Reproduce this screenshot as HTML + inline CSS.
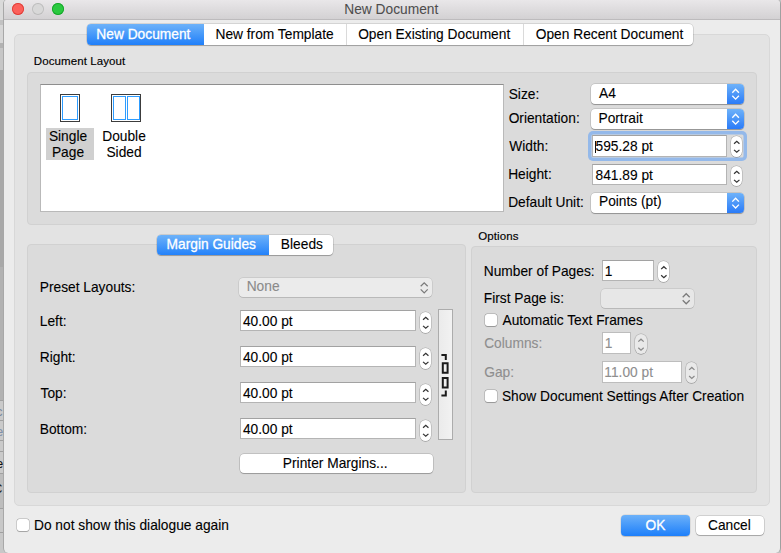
<!DOCTYPE html><html><head><meta charset="utf-8"><title>New Document</title><style>
*{margin:0;padding:0;box-sizing:border-box}
html,body{width:781px;height:553px;overflow:hidden;background:#c4c4c4;position:relative;font-family:"Liberation Sans",sans-serif}
.t{position:absolute;font-size:13.75px;letter-spacing:0px;line-height:16px;white-space:nowrap;-webkit-text-stroke:0.1px currentColor}
.ts{position:absolute;font-size:11.5px;letter-spacing:0.1px;line-height:14px;white-space:nowrap;-webkit-text-stroke:0.15px currentColor}
.popup{position:absolute;background:#fff;border-radius:4px;box-shadow:0 0 0 0.5px rgba(0,0,0,0.2),0 1px 0.8px rgba(0,0,0,0.25)}
.popup .arr{position:absolute;right:0;top:0;bottom:0;width:17px;border-radius:0 4px 4px 0;background:linear-gradient(#6eb2f9,#2a7bf8)}
.dpop{position:absolute;border-radius:4px;box-shadow:0 0 0 0.5px rgba(0,0,0,0.14),0 0.8px 0.6px rgba(0,0,0,0.12)}
.field{position:absolute;background:#fff;border:1px solid #b4b4b4;border-top-color:#a2a2a2}
.step{position:absolute;background:#fff;border-radius:6px;box-shadow:0 0 0 0.5px rgba(0,0,0,0.24),0 0.8px 0.6px rgba(0,0,0,0.16)}
.chk{position:absolute;width:12.2px;height:12.2px;background:#fff;border-radius:2.5px;box-shadow:0 0 0 0.5px rgba(0,0,0,0.26),0 0.6px 0.7px rgba(0,0,0,0.2)}
.btn{position:absolute;background:#fff;border-radius:4px;box-shadow:0 0 0 0.5px rgba(0,0,0,0.24),0 1px 0.8px rgba(0,0,0,0.2)}
</style></head><body>
<div style="position:absolute;left:0;top:0;width:4px;height:553px;background:linear-gradient(#dadada 0,#dadada 20px,#c2c2c2 20px,#c2c2c2 25px,#d6d6d6 25px,#d6d6d6 43px,#b2b2b2 43px,#b2b2b2 48px,#c6c6c6 48px,#c6c6c6 70px,#a9a9a9 70px,#a9a9a9 267px,#b2b2b2 267px,#b2b2b2 400px,#cacaca 400px,#cacaca 473px,#bdbdbd 473px,#bdbdbd 508px,#c8c8c8 508px)"></div>
<div style="position:absolute;left:0px;top:400px;width:3.5px;height:1px;background:#a0a0a0"></div>
<div style="position:absolute;left:0px;top:420px;width:3.5px;height:1px;background:#a0a0a0"></div>
<div style="position:absolute;left:0px;top:440px;width:3.5px;height:1px;background:#a0a0a0"></div>
<div style="position:absolute;left:0px;top:451px;width:3.5px;height:1px;background:#a0a0a0"></div>
<div style="position:absolute;left:0px;top:473px;width:3.5px;height:1px;background:#a0a0a0"></div>
<div style="position:absolute;left:0px;top:508px;width:3.5px;height:1px;background:#a0a0a0"></div>
<div style="position:absolute;left:0px;top:532px;width:3.5px;height:1px;background:#a0a0a0"></div>
<div style="position:absolute;left:0;top:0;width:3.5px;height:553px;overflow:hidden">
<div style="position:absolute;left:-4px;top:404px;font-size:13px;line-height:16px;color:#7a8aa0">c</div>
<div style="position:absolute;left:-4px;top:424px;font-size:13px;line-height:16px;color:#8090a8">e</div>
<div style="position:absolute;left:-4px;top:456px;font-size:13px;line-height:16px;color:#111">e</div>
<div style="position:absolute;left:-7px;top:481px;font-size:13px;line-height:16px;color:#222">C</div>
</div>
<div style="position:absolute;left:3px;top:0;width:778px;height:553px;background:#ececec;border-left:1px solid #a8a8a8;border-right:1px solid #a0a0a0;border-radius:4px 4px 5px 5px;overflow:hidden">
<div style="position:absolute;left:0;top:0;width:776px;height:20px;background:linear-gradient(#e9e7e9,#d3d1d3);border-bottom:1px solid #bdbbbd"></div>
</div>
<div style="position:absolute;left:12px;top:2.9000000000000004px;width:12px;height:12px;border-radius:50%;background:#fc605b;box-shadow:inset 0 0 0 0.9px #de3f39"></div>
<div style="position:absolute;left:32px;top:2.9000000000000004px;width:12px;height:12px;border-radius:50%;background:#d8d8d8;box-shadow:inset 0 0 0 0.9px #bdbdbd"></div>
<div style="position:absolute;left:52px;top:2.9000000000000004px;width:12px;height:12px;border-radius:50%;background:#2ac940;box-shadow:inset 0 0 0 0.9px #17a52b"></div>
<div class="t" style="left:241.3px;width:300px;text-align:center;top:2px;color:#4d4d4d;-webkit-text-stroke:0.05px #4d4d4d">New Document</div>
<div style="position:absolute;left:14px;top:34px;width:756px;height:471.5px;background:#e3e3e3;border:1px solid #d8d8d8;border-radius:5px"></div>
<div style="position:absolute;left:87px;top:24px;width:606px;height:20.5px;background:#fff;border-radius:4px;box-shadow:0 0 0 0.5px rgba(0,0,0,0.2),0 1px 0.8px rgba(0,0,0,0.22);overflow:hidden">
<div style="position:absolute;left:0;top:0;width:117px;height:21px;background:linear-gradient(#6db2f9,#1f7ffa)"></div>
<div style="position:absolute;left:259px;top:0;width:1px;height:21px;background:#dadada"></div>
<div style="position:absolute;left:436px;top:0;width:1px;height:21px;background:#dadada"></div>
</div>
<div class="t" style="left:96.37px;top:27px;color:#fff;-webkit-text-stroke:0.3px #fff">New Document</div>
<div class="t" style="left:215.47px;top:27px;color:#000;">New from Template</div>
<div class="t" style="left:358.15px;top:27px;color:#000;">Open Existing Document</div>
<div class="t" style="left:535.75px;top:27px;color:#000;">Open Recent Document</div>
<div class="ts" style="left:33.76px;top:54px;color:#000;">Document Layout</div>
<div style="position:absolute;left:27px;top:71.5px;width:730px;height:153.3px;background:#dbdbdb;border:1px solid #d1d1d1;border-radius:4px"></div>
<div style="position:absolute;left:40px;top:84px;width:464px;height:128px;background:#fff;border:1px solid #b9b9b9;border-top-color:#8e8e8e"></div>
<div style="position:absolute;left:60px;top:94px;width:20px;height:28px;border:1px solid #3c3c3c"></div>
<div style="position:absolute;left:62px;top:96px;width:16px;height:24px;border:1.5px solid #2d9cff"></div>
<div style="position:absolute;left:111px;top:94px;width:30px;height:28px;border:1px solid #3c3c3c"></div>
<div style="position:absolute;left:112.5px;top:96px;width:13px;height:24px;border:1.5px solid #2d9cff"></div>
<div style="position:absolute;left:126.5px;top:96px;width:13px;height:24px;border:1.5px solid #2d9cff"></div>
<div style="position:absolute;left:46px;top:128px;width:48px;height:32px;background:#d0d0d0"></div>
<div class="t" style="left:-82.0px;width:300px;text-align:center;top:129px;color:#000">Single</div>
<div class="t" style="left:-82.0px;width:300px;text-align:center;top:145px;color:#000">Page</div>
<div class="t" style="left:-26.0px;width:300px;text-align:center;top:129px;color:#000">Double</div>
<div class="t" style="left:-26.0px;width:300px;text-align:center;top:145px;color:#000">Sided</div>
<div class="t" style="left:508.68px;top:87px;color:#000;">Size:</div>
<div class="t" style="left:508.65px;top:111px;color:#000;">Orientation:</div>
<div class="t" style="left:509.24px;top:139px;color:#000;">Width:</div>
<div class="t" style="left:508.17px;top:167px;color:#000;">Height:</div>
<div class="t" style="left:508.17px;top:195px;color:#000;">Default Unit:</div>
<div class="popup" style="left:590.5px;top:84.3px;width:153.3px;height:20.2px"><div class="arr"><svg width="17" height="20.2" style="position:absolute;left:0;top:0"><path d="M5.3 8.70 L8.6 5.30 L11.9 8.70 M5.3 11.70 L8.6 15.10 L11.9 11.70" stroke="#fff" stroke-width="1.35" fill="none"/></svg></div></div>
<div class="t" style="left:599.07px;top:86px;color:#000;">A4</div>
<div class="popup" style="left:590.5px;top:109.3px;width:153.3px;height:20.2px"><div class="arr"><svg width="17" height="20.2" style="position:absolute;left:0;top:0"><path d="M5.3 8.70 L8.6 5.30 L11.9 8.70 M5.3 11.70 L8.6 15.10 L11.9 11.70" stroke="#fff" stroke-width="1.35" fill="none"/></svg></div></div>
<div class="t" style="left:598.47px;top:111px;color:#000;">Portrait</div>
<div style="position:absolute;left:588px;top:131.1px;width:158.5px;height:29.6px;border-radius:5px;box-shadow:inset 0 0 0 3.5px #94b9ea"></div>
<div class="field" style="left:592.3px;top:135.3px;width:134.5px;height:21.5px;"></div>
<div class="step" style="left:730.9px;top:136.4px;width:11.5px;height:20.5px;background:#fff"><svg width="11.5" height="20.5" style="position:absolute;left:0;top:0"><path d="M3.05 7.75 L5.75 5.35 L8.45 7.75 M3.05 13.85 L5.75 16.25 L8.45 13.85" stroke="#333" stroke-width="1.25" fill="none"/></svg></div>
<div class="t" style="left:595.55px;top:139px;color:#000;">595.28 pt</div>
<div style="position:absolute;left:595px;top:141px;width:1.2px;height:12px;background:#111"></div>
<div class="field" style="left:592.3px;top:164.3px;width:134.5px;height:21px;"></div>
<div class="step" style="left:730.9px;top:165.5px;width:11.5px;height:20.5px;background:#fff"><svg width="11.5" height="20.5" style="position:absolute;left:0;top:0"><path d="M3.05 7.75 L5.75 5.35 L8.45 7.75 M3.05 13.85 L5.75 16.25 L8.45 13.85" stroke="#333" stroke-width="1.25" fill="none"/></svg></div>
<div class="t" style="left:595.50px;top:168px;color:#000;">841.89 pt</div>
<div class="popup" style="left:590.5px;top:192.5px;width:153.3px;height:20px"><div class="arr"><svg width="17" height="20" style="position:absolute;left:0;top:0"><path d="M5.3 8.60 L8.6 5.20 L11.9 8.60 M5.3 11.60 L8.6 15.00 L11.9 11.60" stroke="#fff" stroke-width="1.35" fill="none"/></svg></div></div>
<div class="t" style="left:598.97px;top:194px;color:#000;">Points (pt)</div>
<div style="position:absolute;left:27px;top:244px;width:439px;height:248.8px;background:#dbdbdb;border:1px solid #d1d1d1;border-radius:4px"></div>
<div style="position:absolute;left:157.3px;top:234.5px;width:175.7px;height:20px;background:#fff;border-radius:4px;box-shadow:0 0 0 0.5px rgba(0,0,0,0.2),0 1px 0.8px rgba(0,0,0,0.22);overflow:hidden"><div style="position:absolute;left:0;top:0;width:111.4px;height:21px;background:linear-gradient(#6db2f9,#1f7ffa)"></div></div>
<div class="t" style="left:166.57px;top:237px;color:#fff;-webkit-text-stroke:0.3px #fff">Margin Guides</div>
<div class="t" style="left:280.87px;top:237px;color:#000;">Bleeds</div>
<div class="t" style="left:39.77px;top:280px;color:#000;">Preset Layouts:</div>
<div class="dpop" style="left:238.8px;top:277.7px;width:193.4px;height:19.4px;background:#ebebeb"><svg width="17" height="20" style="position:absolute;right:0;top:0"><path d="M5.7 8.3 L9.2 4.8 L12.7 8.3 M5.7 11.4 L9.2 14.9 L12.7 11.4" stroke="#7a7a7a" stroke-width="1.25" fill="none"/></svg></div>
<div class="t" style="left:246.67px;top:279px;color:#8a8a8a;">None</div>
<div class="t" style="left:39.77px;top:314px;color:#000;">Left:</div>
<div class="field" style="left:240.1px;top:309.7px;width:176px;height:21.6px;"></div>
<div class="step" style="left:419.6px;top:312.09999999999997px;width:11.5px;height:20.5px;background:#fff"><svg width="11.5" height="20.5" style="position:absolute;left:0;top:0"><path d="M3.05 7.75 L5.75 5.35 L8.45 7.75 M3.05 13.85 L5.75 16.25 L8.45 13.85" stroke="#333" stroke-width="1.25" fill="none"/></svg></div>
<div class="t" style="left:242.98px;top:314px;color:#000;">40.00 pt</div>
<div class="t" style="left:39.77px;top:350px;color:#000;">Right:</div>
<div class="field" style="left:240.1px;top:345.7px;width:176px;height:21.6px;"></div>
<div class="step" style="left:419.6px;top:348.09999999999997px;width:11.5px;height:20.5px;background:#fff"><svg width="11.5" height="20.5" style="position:absolute;left:0;top:0"><path d="M3.05 7.75 L5.75 5.35 L8.45 7.75 M3.05 13.85 L5.75 16.25 L8.45 13.85" stroke="#333" stroke-width="1.25" fill="none"/></svg></div>
<div class="t" style="left:242.98px;top:350px;color:#000;">40.00 pt</div>
<div class="t" style="left:40.59px;top:386px;color:#000;">Top:</div>
<div class="field" style="left:240.1px;top:381.7px;width:176px;height:21.6px;"></div>
<div class="step" style="left:419.6px;top:384.09999999999997px;width:11.5px;height:20.5px;background:#fff"><svg width="11.5" height="20.5" style="position:absolute;left:0;top:0"><path d="M3.05 7.75 L5.75 5.35 L8.45 7.75 M3.05 13.85 L5.75 16.25 L8.45 13.85" stroke="#333" stroke-width="1.25" fill="none"/></svg></div>
<div class="t" style="left:242.98px;top:386px;color:#000;">40.00 pt</div>
<div class="t" style="left:39.77px;top:422px;color:#000;">Bottom:</div>
<div class="field" style="left:240.1px;top:417.7px;width:176px;height:21.6px;"></div>
<div class="step" style="left:419.6px;top:420.09999999999997px;width:11.5px;height:20.5px;background:#fff"><svg width="11.5" height="20.5" style="position:absolute;left:0;top:0"><path d="M3.05 7.75 L5.75 5.35 L8.45 7.75 M3.05 13.85 L5.75 16.25 L8.45 13.85" stroke="#333" stroke-width="1.25" fill="none"/></svg></div>
<div class="t" style="left:242.98px;top:422px;color:#000;">40.00 pt</div>
<div style="position:absolute;left:438.2px;top:309px;width:14.5px;height:131px;background:linear-gradient(90deg,#ebebeb,#f2f2f2);border:1px solid #acacac"></div>
<svg style="position:absolute;left:438px;top:350px" width="16" height="50"><path d="M3.4 5 H7.8 V10 M4.8 13.3 h4.8 v9.4 h-4.8 z M4.8 28 h4.8 v9.4 h-4.8 z M7.8 40.5 V45.6 H3.4" stroke="#1a1a1a" stroke-width="2" fill="none"/></svg>
<div class="btn" style="left:239.6px;top:453.7px;width:193px;height:19.6px"></div>
<div class="t" style="left:282.87px;top:456px;color:#000;">Printer Margins...</div>
<div class="ts" style="left:478.16px;top:229px;color:#000;">Options</div>
<div style="position:absolute;left:471px;top:246.3px;width:286px;height:246.5px;background:#dbdbdb;border:1px solid #d1d1d1;border-radius:4px"></div>
<div class="t" style="left:483.77px;top:264px;color:#000;">Number of Pages:</div>
<div class="field" style="left:602.1px;top:260.4px;width:51.7px;height:21px;"></div>
<div class="step" style="left:657.5px;top:261.1px;width:11.7px;height:21.2px;background:#fff"><svg width="11.7" height="21.2" style="position:absolute;left:0;top:0"><path d="M3.15 8.10 L5.85 5.70 L8.55 8.10 M3.15 14.20 L5.85 16.60 L8.55 14.20" stroke="#333" stroke-width="1.25" fill="none"/></svg></div>
<div class="t" style="left:604.85px;top:264px;color:#000;">1</div>
<div class="t" style="left:483.77px;top:291px;color:#000;">First Page is:</div>
<div class="dpop" style="left:600.5px;top:288.6px;width:93.8px;height:19.6px;background:#e7e7e7"><svg width="17" height="20" style="position:absolute;right:0;top:0"><path d="M5.7 8.2 L9.2 4.7 L12.7 8.2 M5.7 11.3 L9.2 14.8 L12.7 11.3" stroke="#7a7a7a" stroke-width="1.25" fill="none"/></svg></div>
<div class="chk" style="left:485px;top:313.8px"></div>
<div class="t" style="left:502.47px;top:313px;color:#000;">Automatic Text Frames</div>
<div class="t" style="left:484.20px;top:336px;color:#8e8e8e;">Columns:</div>
<div class="field" style="left:602.1px;top:332.3px;width:28.8px;height:21.5px;border-color:#bdbdbd"></div>
<div class="step" style="left:634.5px;top:334.3px;width:12px;height:20.2px;background:#e9e9e9"><svg width="12" height="20.2" style="position:absolute;left:0;top:0"><path d="M3.30 7.60 L6.00 5.20 L8.70 7.60 M3.30 13.70 L6.00 16.10 L8.70 13.70" stroke="#8a8a8a" stroke-width="1.25" fill="none"/></svg></div>
<div class="t" style="left:604.85px;top:336px;color:#8e8e8e;">1</div>
<div class="t" style="left:484.21px;top:365px;color:#8e8e8e;">Gap:</div>
<div class="field" style="left:602.1px;top:361.1px;width:79.8px;height:21.8px;border-color:#bdbdbd"></div>
<div class="step" style="left:685.8px;top:362.3px;width:11.6px;height:20.7px;background:#e9e9e9"><svg width="11.6" height="20.7" style="position:absolute;left:0;top:0"><path d="M3.10 7.85 L5.80 5.45 L8.50 7.85 M3.10 13.95 L5.80 16.35 L8.50 13.95" stroke="#8a8a8a" stroke-width="1.25" fill="none"/></svg></div>
<div class="t" style="left:604.35px;top:365px;color:#8e8e8e;">11.00 pt</div>
<div class="chk" style="left:485px;top:390px"></div>
<div class="t" style="left:501.88px;top:389px;color:#000;">Show Document Settings After Creation</div>
<div class="chk" style="left:16.9px;top:518.8px"></div>
<div class="t" style="left:33.97px;top:518px;color:#000;">Do not show this dialogue again</div>
<div style="position:absolute;left:621px;top:515px;width:69px;height:20.6px;border-radius:4px;background:linear-gradient(#6cb1f9,#1d7ffa);box-shadow:0 0 0 0.5px rgba(0,0,0,0.12),0 1px 0.8px rgba(0,0,0,0.15)"></div>
<div class="t" style="left:505.5px;width:300px;text-align:center;top:518px;color:#fff;-webkit-text-stroke:0.3px #fff">OK</div>
<div class="btn" style="left:695.5px;top:515.5px;width:68px;height:19.8px"></div>
<div class="t" style="left:579.4px;width:300px;text-align:center;top:518px;color:#000">Cancel</div>
</body></html>
